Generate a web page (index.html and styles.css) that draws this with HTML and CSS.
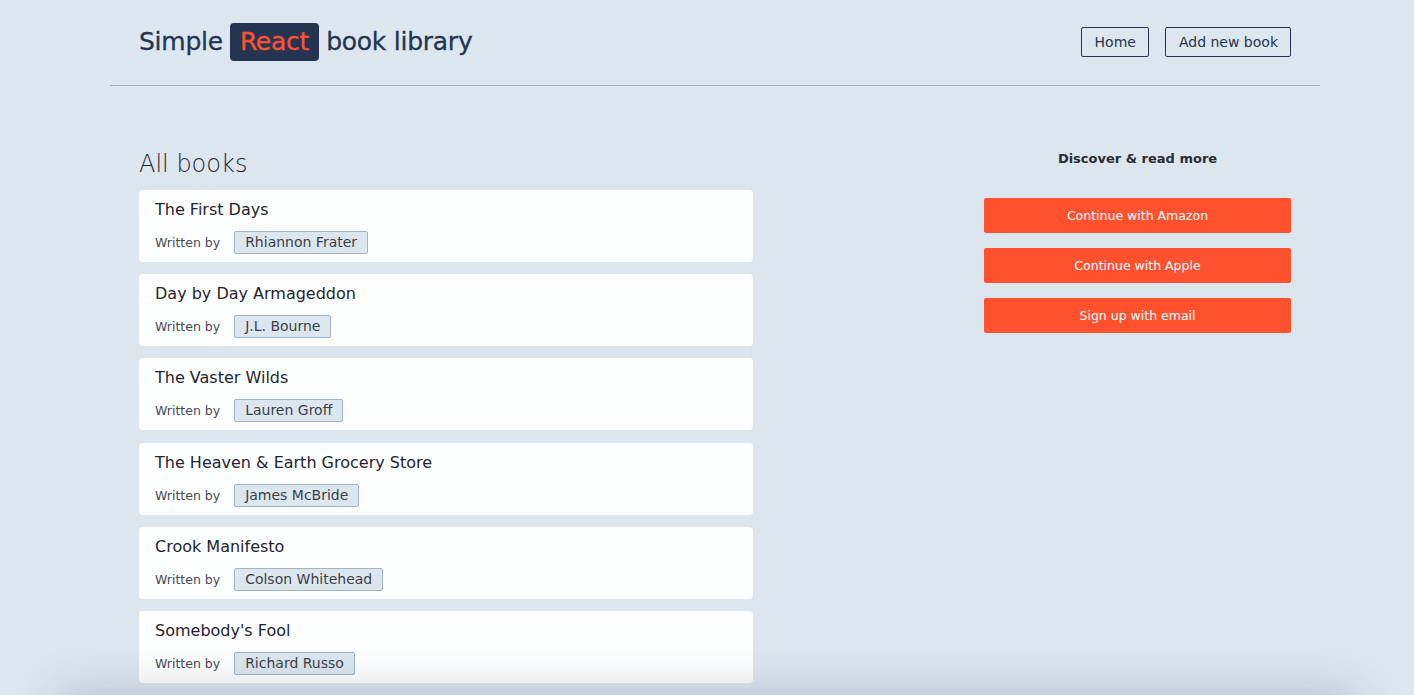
FILE: index.html
```html
<!DOCTYPE html>
<html lang="en">
<head>
<meta charset="utf-8">
<title>Simple React book library</title>
<link rel="stylesheet" href="styles.css">
</head>
<body>
<div class="page">
  <header class="topbar">
    <h1 class="brand">Simple <span class="brand-badge">React</span> book library</h1>
    <nav class="nav">
      <a class="nav-btn" href="#">Home</a>
      <a class="nav-btn" href="#">Add new book</a>
    </nav>
  </header>
  <main class="content">
    <section class="books">
      <h2 class="books-title">All books</h2>
      <ul class="book-list">
        <li class="book-card">
          <div class="book-name">The First Days</div>
          <div class="book-meta"><span class="written">Written by</span><span class="author">Rhiannon Frater</span></div>
        </li>
        <li class="book-card">
          <div class="book-name">Day by Day Armageddon</div>
          <div class="book-meta"><span class="written">Written by</span><span class="author">J.L. Bourne</span></div>
        </li>
        <li class="book-card">
          <div class="book-name">The Vaster Wilds</div>
          <div class="book-meta"><span class="written">Written by</span><span class="author">Lauren Groff</span></div>
        </li>
        <li class="book-card">
          <div class="book-name">The Heaven &amp; Earth Grocery Store</div>
          <div class="book-meta"><span class="written">Written by</span><span class="author">James McBride</span></div>
        </li>
        <li class="book-card">
          <div class="book-name">Crook Manifesto</div>
          <div class="book-meta"><span class="written">Written by</span><span class="author">Colson Whitehead</span></div>
        </li>
        <li class="book-card">
          <div class="book-name">Somebody's Fool</div>
          <div class="book-meta"><span class="written">Written by</span><span class="author">Richard Russo</span></div>
        </li>
      </ul>
    </section>
    <aside class="side">
      <div class="side-inner">
        <h3 class="side-title">Discover &amp; read more</h3>
        <button class="cta">Continue with Amazon</button>
        <button class="cta">Continue with Apple</button>
        <button class="cta">Sign up with email</button>
      </div>
    </aside>
  </main>
</div>
<div class="bottom-shade"></div>
</body>
</html>
```
FILE: styles.css
```css
* { box-sizing: border-box; }
html, body { margin: 0; padding: 0; }
body {
  background: #dce6ef;
  color: #253551;
  font-family: "DejaVu Sans", "Liberation Sans", sans-serif;
  overflow: hidden;
  height: 695px;
}
.page {
  width: 1210px;
  margin-left: 110px;
}
.topbar {
  display: flex;
  align-items: center;
  justify-content: space-between;
  height: 86px;
  padding: 0 29px 2px 29px;
  border-bottom: 1px solid #9eafc2;
}
.brand {
  margin: 0;
  font-size: 25px;
  font-weight: 500;
  color: #253551;
  display: flex;
  align-items: center;
  gap: 7px;
  letter-spacing: -0.25px;
  -webkit-text-stroke: 0.3px #253551;
}
.brand-badge {
  background: #253551;
  color: #ff5233;
  -webkit-text-stroke: 0.3px #ff5233;
  border-radius: 4px;
  padding: 0 10px;
  height: 38px;
  line-height: 38px;
}
.nav {
  display: flex;
  gap: 16px;
}
.nav-btn {
  display: inline-block;
  border: 1px solid #253551;
  border-radius: 2px;
  padding: 0 12px 0 13px;
  height: 30px;
  line-height: 28px;
  font-size: 14px;
  color: #253551;
  text-decoration: none;
}
.content {
  display: grid;
  grid-template-columns: 768px 384px;
  padding: 0 29px;
}
.books-title {
  margin: 63px 0 11px 0;
  font-size: 24px;
  font-weight: 300;
  line-height: 30px;
  color: #1f2430;
}
.book-list {
  list-style: none;
  margin: 0;
  padding: 0;
  width: 614px;
  display: flex;
  flex-direction: column;
  gap: 12.2px;
}
.book-card {
  background: #fdfefe;
  border-radius: 4px;
  height: 72px;
  padding: 9px 16px 0 16px;
}
.book-name {
  font-size: 16px;
  line-height: 22px;
  color: #1f2430;
}
.book-meta {
  margin-top: 10px;
  display: flex;
  align-items: center;
  gap: 14px;
}
.written {
  font-size: 12.5px;
  color: #454a54;
}
.author {
  background: #dce6ef;
  border: 1px solid #9fb4c8;
  border-radius: 2px;
  height: 23px;
  line-height: 21px;
  padding: 0 10px;
  font-size: 14px;
  color: #3b3f48;
}
.side {
  display: flex;
  justify-content: flex-end;
}
.side-inner {
  width: 307px;
  display: flex;
  flex-direction: column;
  gap: 15px;
}
.side-title {
  margin: 64px 0 15px 0;
  text-align: center;
  font-size: 13px;
  font-weight: 600;
  line-height: 18px;
  color: #2a2d33;
}
.cta {
  height: 35px;
  border: none;
  border-radius: 2px;
  background: #ff512e;
  color: #ffffff;
  font-family: inherit;
  font-size: 12.5px;
}
.bottom-shade {
  position: fixed;
  left: 60px;
  right: 60px;
  bottom: -30px;
  height: 30px;
  box-shadow: 0 0 45px 4px rgba(40, 60, 90, 0.22);
}
```
